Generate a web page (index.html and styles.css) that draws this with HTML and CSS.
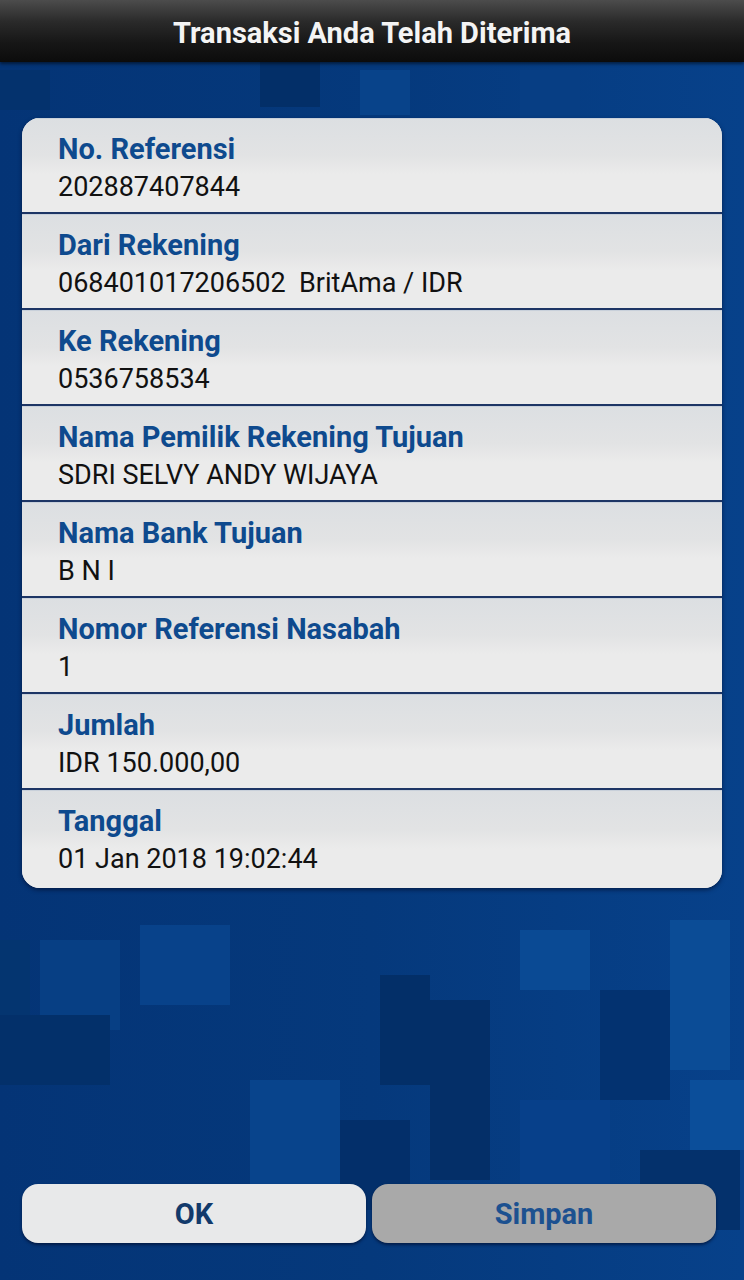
FILE: index.html
```html
<!DOCTYPE html>
<html lang="id">
<head>
<meta charset="utf-8">
<title>Transaksi Anda Telah Diterima</title>
<link rel="stylesheet" href="styles.css">
</head>
<body>
<div class="screen">
  <header class="topbar">Transaksi Anda Telah Diterima</header>
  <main class="content">
    <section class="card">
      <div class="row"><div class="label">No. Referensi</div><div class="value">202887407844</div></div>
      <div class="row"><div class="label">Dari Rekening</div><div class="value">068401017206502&nbsp; BritAma / IDR</div></div>
      <div class="row"><div class="label">Ke Rekening</div><div class="value">0536758534</div></div>
      <div class="row"><div class="label">Nama Pemilik Rekening Tujuan</div><div class="value">SDRI SELVY ANDY WIJAYA</div></div>
      <div class="row"><div class="label">Nama Bank Tujuan</div><div class="value">B N I</div></div>
      <div class="row"><div class="label">Nomor Referensi Nasabah</div><div class="value">1</div></div>
      <div class="row"><div class="label">Jumlah</div><div class="value">IDR 150.000,00</div></div>
      <div class="row last"><div class="label">Tanggal</div><div class="value">01 Jan 2018 19:02:44</div></div>
    </section>
  </main>
  <footer class="actions">
    <button class="btn btn-ok">OK</button>
    <button class="btn btn-save">Simpan</button>
  </footer>
</div>
</body>
</html>
```

FILE: styles.css
```css
html, body {
  margin: 0;
  padding: 0;
}
body {
  font-family: Roboto, "Noto Sans", "Liberation Sans", sans-serif;
  background: #053a7c;
}
.screen {
  width: 744px;
  height: 1280px;
  display: flex;
  flex-direction: column;
  background-color: #05387a;
  background-image:
    linear-gradient(#08428a, #08428a),
    linear-gradient(#03306a, #03306a),
    linear-gradient(#08448c, #08448c),
    linear-gradient(#042f68, #042f68),
    linear-gradient(#0a4a94, #0a4a94),
    linear-gradient(#033270, #033270),
    linear-gradient(#0b4e9a, #0b4e9a),
    linear-gradient(#073f84, #073f84),
    linear-gradient(#032f6a, #032f6a),
    linear-gradient(#07408a, #07408a),
    linear-gradient(#04316c, #04316c),
    linear-gradient(#0b4c96, #0b4c96),
    linear-gradient(#032f68, #032f68),
    linear-gradient(#08438a, #08438a),
    linear-gradient(#04326d, #04326d),
    linear-gradient(#073e84, #073e84),
    linear-gradient(#032f68, #032f68),
    linear-gradient(#043570, #043570),
    linear-gradient(90deg, #043476 0%, #05397c 50%, #07418a 100%);
  background-repeat: no-repeat;
  background-position:
    140px 925px,
    0px 1015px,
    250px 1080px,
    430px 1000px,
    520px 930px,
    600px 990px,
    690px 1080px,
    40px 940px,
    300px 1120px,
    520px 1100px,
    640px 1150px,
    670px 920px,
    380px 975px,
    360px 70px,
    0px 70px,
    520px 70px,
    260px 62px,
    0px 940px,
    0 0;
  background-size:
    90px 80px,
    110px 70px,
    90px 110px,
    60px 180px,
    70px 60px,
    70px 110px,
    54px 70px,
    80px 90px,
    110px 90px,
    90px 100px,
    100px 80px,
    60px 150px,
    50px 110px,
    50px 45px,
    50px 40px,
    60px 50px,
    60px 45px,
    30px 90px,
    100% 100%;
}
.topbar {
  height: 62px;
  flex: none;
  display: flex;
  align-items: center;
  justify-content: center;
  padding-top: 3px;
  box-sizing: border-box;
  color: #f4f4f4;
  font-weight: 700;
  font-size: 29px;
  background: linear-gradient(#4c4c4c 0%, #2a2a2a 35%, #161616 70%, #0c0c0c 100%);
  box-shadow: 0 2px 3px rgba(0, 0, 0, 0.5);
}
.content {
  flex: 1;
  padding: 56px 22px 0;
}
.card {
  border-radius: 18px;
  overflow: hidden;
  background: #e6e7e8;
  box-shadow: 0 2px 4px rgba(0, 10, 40, 0.6);
}
.row {
  height: 79px;
  padding: 15px 36px 0;
  background: linear-gradient(#dcdfe2 0%, #e2e3e4 40%, #ebebeb 60%, #ebebeb 100%);
  border-bottom: 2px solid #1d3565;
  box-shadow: inset 0 1px 0 #c8d0da;
}
.row.last {
  border-bottom: none;
  height: 83px;
}
.label {
  font-weight: 700;
  font-size: 29px;
  line-height: 32px;
  color: #0e4a8e;
}
.value {
  margin-top: 6px;
  font-size: 27px;
  line-height: 32px;
  color: #111;
}
.actions {
  flex: none;
  display: flex;
  gap: 6px;
  padding: 0 28px 37px 22px;
}
.btn {
  flex: 1;
  height: 59px;
  border: none;
  border-radius: 16px;
  font-family: inherit;
  font-weight: 700;
  font-size: 29px;
  box-shadow: 0 2px 3px rgba(0, 10, 40, 0.6);
}
.btn-ok {
  background: #e8e9ea;
  color: #123a6b;
}
.btn-save {
  background: #a9a9a9;
  color: #1c5190;
}
```
